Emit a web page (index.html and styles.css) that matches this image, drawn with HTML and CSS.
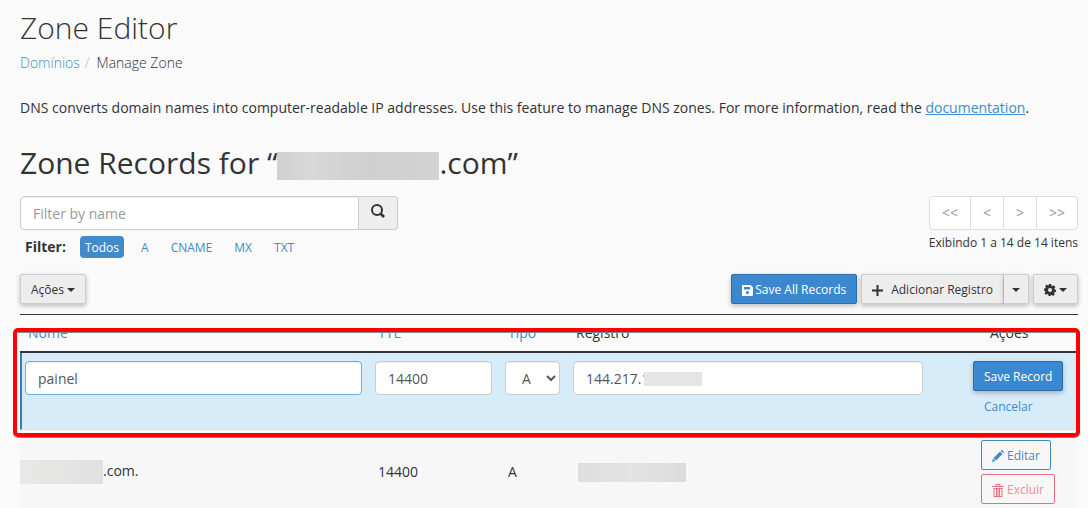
FILE: index.html
```
<!DOCTYPE html>
<html lang="pt-BR">

<head>
    <meta charset="UTF-8">
    <meta name="viewport" content="width=device-width, initial-scale=1.0">
    <title>Zone Editor</title>
    <link rel="stylesheet" href="styles.css">
</head>

<body>

    <main class="page">
        <h1>Zone Editor</h1>
        <nav class="breadcrumb">
            <a href="#">Domínios</a>
            <span class="divider">/</span>
            <span>Manage Zone</span>
        </nav>

        <p class="description">DNS converts domain names into computer-readable IP addresses. Use this feature to manage DNS zones. For more information, read the <a href="#">documentation</a>.</p>

        <h2>Zone Records for “<span class="mask mask-title"></span>.com”</h2>

        <div class="top-row">
            <div class="search">
                <div class="input-group">
                    <input type="text" class="form-control" placeholder="Filter by name" aria-label="Filter by name">
                    <button class="search-btn" aria-label="Search">
                        <svg width="14" height="14" viewBox="0 0 14 14" fill="none" stroke="#333">
                            <circle cx="6" cy="6" r="5" stroke-width="2" />
                            <path d="M9.5 9.5L13 13" stroke-width="2.6" />
                        </svg>
                    </button>
                </div>
                <div class="filters">
                    <strong>Filter:</strong>
                    <a href="#" class="pill active">Todos</a>
                    <a href="#" class="pill">A</a>
                    <a href="#" class="pill">CNAME</a>
                    <a href="#" class="pill">MX</a>
                    <a href="#" class="pill">TXT</a>
                </div>
            </div>
            <div class="paging">
                <div class="pager">
                    <button disabled>&lt;&lt;</button>
                    <button disabled>&lt;</button>
                    <button disabled>&gt;</button>
                    <button disabled>&gt;&gt;</button>
                </div>
                <div class="count">Exibindo 1 a 14 de 14 itens</div>
            </div>
        </div>

        <div class="toolbar">
            <button class="btn">Ações<span class="caret"></span></button>
            <div class="toolbar-right">
                <button class="btn btn-primary btn-save-all">
                    <svg width="11" height="11" viewBox="0 0 11 11">
                        <path fill="#fff" fill-rule="evenodd" d="M1 0H8.5L11 2.5V10Q11 11 10 11H1Q0 11 0 10V1Q0 0 1 0ZM2 2V4.5H8V2ZM5.5 6A1.6 1.6 0 1 0 5.5 9.2A1.6 1.6 0 1 0 5.5 6Z" />
                    </svg>
                    Save All Records
                </button>
                <div class="btn-group">
                    <button class="btn btn-add">
                        <svg width="11" height="11" viewBox="0 0 11 11">
                            <path fill="#333" d="M4.5 0h2v4.5H11v2H6.5V11h-2V6.5H0v-2h4.5z" />
                        </svg>
                        Adicionar Registro
                    </button>
                    <button class="btn btn-toggle" aria-label="Mais opções"><span class="caret"></span></button>
                </div>
                <button class="btn" aria-label="Configurações">
                    <svg width="12" height="12" viewBox="0 0 12 12">
                        <path fill="#333" d="M4.9 0h2.2l.3 1.6 1 .5 1.5-.8 1.5 1.9-1 1.2.3 1 1.3.4v2l-1.5.4-.5 1 .8 1.4-1.7 1.3-1.3-.9-1 .3L6.4 12H4.6l-.3-1.6-1-.4-1.5.8L.5 9.200l.9-1.300-.4-1L0 6.600V4.700l1.400-.4.5-1L1.100 1.900 2.700.6 4 1.500l.7-.3z" />
                        <circle cx="6" cy="6" r="2" fill="#ededed" />
                    </svg><span class="caret"></span>
                </button>
            </div>
        </div>

        <div class="records">
            <table>
                <colgroup>
                    <col>
                    <col class="col-ttl">
                    <col class="col-type">
                    <col class="col-record">
                    <col class="col-actions">
                </colgroup>
                <thead>
                    <tr>
                        <th><a href="#">Nome</a></th>
                        <th><a href="#">TTL</a></th>
                        <th><a href="#">Tipo</a></th>
                        <th>Registro</th>
                        <th class="actions">Ações</th>
                    </tr>
                </thead>
                <tbody>
                    <tr class="editing">
                        <td><input type="text" class="form-control focused" value="painel" aria-label="Nome"></td>
                        <td><input type="text" class="form-control" value="14400" aria-label="TTL"></td>
                        <td>
                            <select class="form-control" aria-label="Tipo">
                                <option>A</option>
                            </select>
                        </td>
                        <td class="record">
                            <div class="record-field">
                                <input type="text" class="form-control" value="144.217.1" aria-label="Registro">
                                <span class="mask mask-ip"></span>
                            </div>
                        </td>
                        <td>
                            <div class="stack">
                                <button class="btn btn-primary">Save Record</button>
                                <button class="btn btn-link">Cancelar</button>
                            </div>
                        </td>
                    </tr>
                    <tr class="row">
                        <td class="name"><span class="mask mask-name"></span>.com.</td>
                        <td>14400</td>
                        <td>A</td>
                        <td><span class="mask mask-value"></span></td>
                        <td class="actions">
                            <div class="stack">
                                <button class="btn btn-edit">
                                    <svg width="12" height="12" viewBox="0 0 12 12" fill="#428bca">
                                        <path d="M0 12l1-3.500 2.500 2.500zM1.600 7.900L8 1.500 10.500 4 4.100 10.400zM8.700.8l.5-.5q.6-.5 1.200 0l1.300 1.300q.5.600 0 1.200l-.5.5z" />
                                    </svg>
                                    Editar
                                </button>
                                <button class="btn btn-delete">
                                    <svg width="12" height="13" viewBox="0 0 12 13" fill="none" stroke="#e8707e">
                                        <path d="M0 2.500h12M4 2V.5h4V2M1.500 4.500h9M2 4.500v8h8v-8M4.500 5v7M6 5v7M7.500 5v7" />
                                    </svg>
                                    Excluir
                                </button>
                            </div>
                        </td>
                    </tr>
                </tbody>
            </table>
            <div class="highlight"></div>
        </div>
    </main>

</body>

</html>
```
FILE: styles.css
```
* {
    box-sizing: border-box;
}

body {
    margin: 0;
    background: #fafafa;
    color: #333;
    font-family: "Open Sans", "Noto Sans", sans-serif;
    font-size: 14px;
    line-height: 20px;
    overflow: hidden;
}

a {
    color: #428bca;
    text-decoration: none;
}

button,
input,
select {
    font: inherit;
    color: inherit;
    margin: 0;
}

.page {
    padding: 8px 10px 0 20px;
}

h1,
h2 {
    margin: 0;
    font-size: 30px;
    line-height: 40px;
}

h1 {
    font-weight: 300;
}

h2 {
    font-weight: 400;
    padding-top: 25px;
}

.breadcrumb {
    display: flex;
    gap: 5px;
    padding-top: 5px;
    font-weight: 300;
}

.divider {
    color: #bbb;
    padding-right: 2px;
}

.description {
    margin: 25px 0 0;
}

.description a {
    text-decoration: underline;
}

/* hidden parts of domains and addresses */
.mask {
    display: inline-block;
    background: linear-gradient(90deg, #d0d0d0, #d8d8d8 20%, #cfcfcf 60%, #d3d3d3);
    vertical-align: middle;
}

.mask-title {
    width: 162px;
    height: 28px;
}

/* search and paging */
.top-row {
    display: flex;
    justify-content: space-between;
    align-items: flex-start;
    padding-top: 13px;
}

.search {
    width: 378px;
}

.input-group {
    display: flex;
}

.form-control {
    display: block;
    width: 100%;
    height: 34px;
    padding: 6px 12px;
    background: #fff;
    color: #555;
    border: 1px solid #ccc;
    border-radius: 4px;
    box-shadow: inset 0 1px 1px rgba(0, 0, 0, 0.075);
    outline: none;
}

.form-control::placeholder {
    color: #999;
}

.form-control.focused {
    border-color: #66afe9;
}

.input-group .form-control {
    border-radius: 4px 0 0 4px;
}

.search-btn {
    width: 39px;
    flex: none;
    padding: 0;
    background: #eee;
    border: 1px solid #ccc;
    border-left: 0;
    border-radius: 0 4px 4px 0;
}

.filters {
    display: flex;
    align-items: center;
    gap: 12px;
    padding: 6px 0 0 5px;
}

.filters strong {
    padding-right: 2px;
}

.pill {
    padding: 2px 5px 0;
    font-size: 12px;
    border-radius: 4px;
}

.pill.active {
    background: #428bca;
    color: #fff;
}

.paging {
    display: flex;
    flex-direction: column;
    align-items: flex-end;
}

.pager {
    display: flex;
    border: 1px solid #ddd;
    border-radius: 4px;
    background: #fff;
}

.pager button {
    height: 32px;
    padding: 0 12px;
    background: none;
    border: 0;
    border-left: 1px solid #ddd;
    color: #999;
}

.pager button:first-child {
    border-left: 0;
}

.count {
    padding-top: 3px;
    font-size: 12px;
}

/* buttons */
.btn {
    display: inline-flex;
    align-items: center;
    gap: 3px;
    height: 30px;
    padding: 2px 10px 0;
    font-size: 12px;
    white-space: nowrap;
    background: #ededed;
    border: 1px solid #ccc;
    border-radius: 2px;
    box-shadow: 0 2px 5px rgba(0, 0, 0, 0.25);
}

.btn-primary {
    background: #3a89d0;
    border-color: #2a6fae;
    color: #fff;
}

.btn-save-all {
    gap: 2px;
}

.btn-link,
.btn-edit,
.btn-delete {
    background: none;
    box-shadow: none;
}

.btn-link {
    border-color: transparent;
    color: #428bca;
}

.btn-edit {
    border-color: #428bca;
    color: #428bca;
}

.btn-delete {
    border-color: #e8707e;
    color: #e8909a;
}

.caret {
    border: 4px solid transparent;
    border-top-color: #333;
    border-bottom: 0;
}

.toolbar {
    display: flex;
    justify-content: space-between;
    padding: 16px 0 10px;
}

.toolbar-right {
    display: flex;
    gap: 4px;
}

.btn-group {
    display: flex;
}

.btn-add {
    gap: 8px;
    border-radius: 2px 0 0 2px;
}

.btn-toggle {
    padding: 2px 8px 0;
    border-left: 0;
    border-radius: 0 2px 2px 0;
}

/* records table */
.records {
    position: relative;
    border-top: 1px solid #333;
}

table {
    width: 100%;
    table-layout: fixed;
    border-collapse: separate;
    border-spacing: 0;
}

.col-ttl {
    width: 130px;
}

.col-type {
    width: 68px;
}

.col-record {
    width: 400px;
}

.col-actions {
    width: 110px;
}

th {
    padding: 8px;
    font-weight: 400;
    text-align: left;
    border-bottom: 2px solid #333;
}

th.actions {
    padding-left: 22px;
}

td {
    padding: 8px;
}

.editing td {
    padding: 8px 8px 8px 5px;
    vertical-align: top;
    background: #d7ecf9;
    border-bottom: 1px solid #ddd;
}

.editing td:first-child {
    padding-left: 3px;
    border-left: 2px solid #2a80b9;
}

.editing td.record {
    padding-right: 45px;
}

.editing .stack {
    gap: 0;
}

.record-field {
    position: relative;
}

.mask-ip {
    position: absolute;
    top: 11px;
    left: 71px;
    width: 58px;
    height: 14px;
    background: #e5e5e5;
}

.row td {
    padding: 10px 8px;
    background: #f7f7f7;
}

.row td.name {
    padding-left: 0;
}

.row td.actions {
    padding-left: 13px;
}

.stack {
    display: flex;
    flex-direction: column;
    align-items: flex-start;
    gap: 4px;
}

.mask-name {
    width: 83px;
    height: 24px;
    background: linear-gradient(90deg, #e8e8e6, #dfe0e0);
}

.mask-value {
    width: 108px;
    height: 19px;
    margin-left: 2px;
    background: linear-gradient(90deg, #dedede, #e3e3e3 50%, #dcdcdc);
}

/* frame over the row being edited */
.highlight {
    position: absolute;
    top: 13px;
    left: -7px;
    right: -2px;
    height: 109px;
    border: 4px solid #f00;
    border-radius: 5px;
    box-shadow: 0 1px 0 #888, inset 0 1px 0 #888;
}
```
